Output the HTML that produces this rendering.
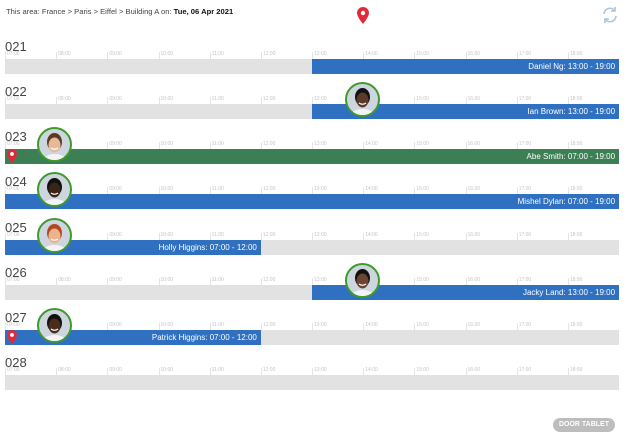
<!DOCTYPE html>
<html><head><meta charset="utf-8"><style>
body{margin:0;width:640px;height:439px;background:#fff;font-family:"Liberation Sans",sans-serif;position:relative;overflow:hidden}
.a{position:absolute}
.hdr{left:6px;top:7px;font-size:7.6px;color:#444}
.lbl{position:absolute;left:5px;font-size:13px;color:#444}
.bar{position:absolute;left:5px;width:614px;height:15px;background:#e2e2e2}
.seg{position:absolute;top:0;height:15px;color:#fff;font-size:8px;line-height:15px;text-align:right;box-sizing:border-box;padding-right:4px;white-space:nowrap}
.b{background:#3070c0}.g{background:#3d7f55}
.tk{position:absolute;height:7px;border-left:1px solid #e4e4e4;font-size:5px;color:#c4c4c4;line-height:5px;padding-left:1px}
.av{position:absolute;width:31px;height:31px;border:2px solid #3f9a2e;border-radius:50%;overflow:hidden;background:#cdd6df}
.btn{left:553px;top:418px;width:62px;height:14px;border-radius:7px;background:#bdbdbd;color:#fff;font-size:7px;font-weight:bold;text-align:center;line-height:14px;letter-spacing:0}
</style></head><body>
<div class="a hdr">This area: France &gt; Paris &gt; Eiffel &gt; Building A on: <b style="color:#111">Tue, 06 Apr 2021</b></div>
<svg class="a" style="left:357px;top:7px" width="12" height="17" viewBox="0 0 12 17"><path d="M6 0C2.7 0 0 2.6 0 5.9 0 10 6 17 6 17s6-7 6-11.1C12 2.6 9.3 0 6 0z" fill="#e02a3a"/><circle cx="6" cy="6" r="2.2" fill="#fff"/></svg>
<svg class="a" style="left:601px;top:6px" width="18" height="18" viewBox="0 0 18 18" fill="none" stroke="#a9c3e0" stroke-width="1.6"><path d="M3 8A6 6 0 0 1 14 5"/><path d="M14 1v4h-4"/><path d="M15 10A6 6 0 0 1 4 13"/><path d="M4 17v-4h4"/></svg>
<div id="rows"></div>
<div class="a btn">DOOR TABLET</div>
<script>
var rows=[["021",[["b",6,12,"Daniel Ng: 13:00 - 19:00"]],null,0],
["022",[["b",6,12,"Ian Brown: 13:00 - 19:00"]],345,0],
["023",[["g",0,12,"Abe Smith: 07:00 - 19:00"]],37,1],
["024",[["b",0,12,"Mishel Dylan: 07:00 - 19:00"]],37,0],
["025",[["b",0,5,"Holly Higgins: 07:00 - 12:00"]],37,0],
["026",[["b",6,12,"Jacky Land: 13:00 - 19:00"]],345,0],
["027",[["b",0,5,"Patrick Higgins: 07:00 - 12:00"]],37,1],
["028",[],null,0]];
var skins=["","#5a3a28","#e8b898","#3a2418","#e9b48f","#6b4530","#4a2c1c"];
var hair=["","#111","#5a3a20","#111","#b5461e","#111","#111"];
var h="",u=51.17;
rows.forEach(function(r,i){var t=59+Math.round(45.15*i);
h+='<div class="lbl" style="top:'+(t-20)+'px">'+r[0]+'</div>';
for(var k=0;k<12;k++){h+='<div class="tk" style="left:'+(5+u*k)+'px;top:'+(t-7)+'px">'+(k+7<10?'0':'')+(k+7)+':00</div>';}
h+='<div class="bar" style="top:'+t+'px">';
r[1].forEach(function(s){h+='<div class="seg '+s[0]+'" style="left:'+(s[1]*u)+'px;width:'+((s[2]-s[1])*u)+'px">'+s[3]+'</div>';});
h+='</div>';
if(r[3])h+='<svg class="a" style="left:7px;top:'+t+'px" width="10" height="14" viewBox="0 0 12 17"><path d="M6 0C2.7 0 0 2.6 0 5.9 0 10 6 17 6 17s6-7 6-11.1C12 2.6 9.3 0 6 0z" fill="#e02a3a"/><circle cx="6" cy="6" r="2.3" fill="#fff"/></svg>';
if(r[2]!==null){h+='<div class="av" style="left:'+r[2]+'px;top:'+(t-22)+'px"><svg width="31" height="31" viewBox="0 0 31 31"><ellipse cx="15.5" cy="33" rx="13" ry="8" fill="#f4f4f4"/><ellipse cx="15.5" cy="13" rx="7.5" ry="9" fill="'+hair[i]+'"/><ellipse cx="15.5" cy="16" rx="6" ry="7.5" fill="'+skins[i]+'"/><path d="M12 19q3.5 2.5 7 0" stroke="#fff" stroke-width="1.2" fill="none"/></svg></div>';}
});
document.getElementById("rows").innerHTML=h;
</script>
</body></html>
